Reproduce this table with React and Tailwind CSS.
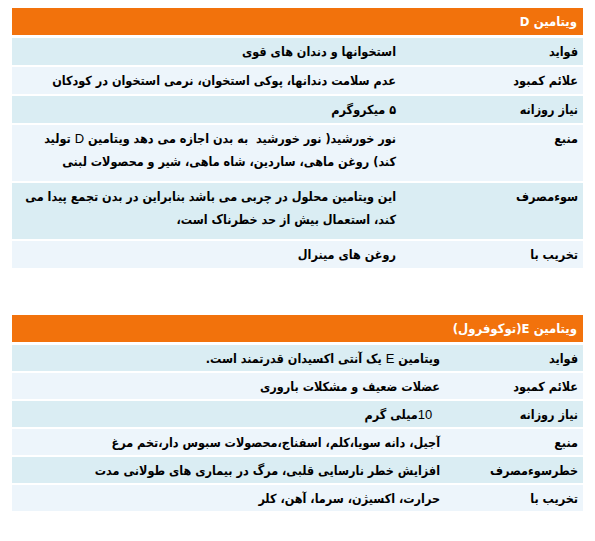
const font = { fontFamily: '"DejaVu Sans Condensed", "DejaVu Sans", sans-serif' };

const Latin = ({ children }) => (
  <span className="font-normal text-[13px] font-['Liberation_Sans',sans-serif]">{children}</span>
);

const VITAMIN_D = [
  { label: 'فواید', text: ['استخوانها و دندان های قوی'] },
  { label: 'علائم کمبود', text: ['عدم سلامت دندانها، پوکی استخوان، نرمی استخوان در کودکان'] },
  { label: 'نیاز روزانه', text: ['۵ میکروگرم'] },
  {
    label: 'منبع',
    text: [
      <>نور خورشید( نور خورشید  به بدن اجازه می دهد ویتامین <Latin>D</Latin> تولید</>,
      'کند) روغن ماهی، ساردین، شاه ماهی، شیر و محصولات لبنی',
    ],
  },
  {
    label: 'سوءمصرف',
    text: [
      'این ویتامین محلول در چربی می باشد بنابراین در بدن تجمع پیدا می',
      'کند، استعمال بیش از حد خطرناک است،',
    ],
  },
  { label: 'تخریب  با', text: ['روغن های مینرال'] },
];

const VITAMIN_E = [
  { label: 'فواید', text: [<>ویتامین <Latin>E</Latin> یک آنتی اکسیدان قدرتمند است.</>] },
  { label: 'علائم کمبود', text: ['عضلات ضعیف و مشکلات باروری'] },
  { label: 'نیاز روزانه', text: [<>  <Latin>10</Latin>میلی گرم</>] },
  { label: 'منبع', text: ['آجیل، دانه سویا،کلم، اسفناج،محصولات سبوس دار،تخم مرغ'] },
  { label: 'خطرسوءمصرف', text: ['افزایش خطر نارسایی قلبی، مرگ در بیماری های طولانی مدت'] },
  { label: 'تخریب با', text: ['حرارت، اکسیژن، سرما، آهن، کلر'] },
];

function VitaminTable({ title, rows, labelWidth, rowHeight, lineHeight }) {
  return (
    <div className="mx-[12px] w-[571px]" style={font}>
      <div className="h-[27px] bg-[#f2720c] text-white font-bold text-[13px] leading-[27px] px-[6px] mb-[3px]">
        {title}
      </div>
      {rows.map((row, i) => (
        <div
          key={i}
          className={`flex border-b-2 border-white text-[12.5px] font-bold text-black ${
            i % 2 === 0 ? 'bg-[#daedf3]' : 'bg-[#edf5fb]'
          }`}
          style={{ minHeight: rowHeight * row.text.length, lineHeight: lineHeight + 'px' }}
        >
          <div className="shrink-0 pr-[5px] pt-[2px]" style={{ width: labelWidth }}>
            {row.label}
          </div>
          <div className="flex-1 pr-[5px] pt-[2px]">
            {row.text.map((line, j) => (
              <div key={j} className="whitespace-pre">{line}</div>
            ))}
          </div>
        </div>
      ))}
    </div>
  );
}

export default function App() {
  return (
    <div dir="rtl" className="w-[595px] h-[541px] bg-white pt-[8px]">
      <VitaminTable
        title={<>ویتامین D</>}
        rows={VITAMIN_D}
        labelWidth={182}
        rowHeight={29}
        lineHeight={23}
      />
      <div className="h-[45px]" />
      <VitaminTable
        title={<>ویتامین E(توکوفرول)</>}
        rows={VITAMIN_E}
        labelWidth={138}
        rowHeight={28}
        lineHeight={23}
      />
    </div>
  );
}
